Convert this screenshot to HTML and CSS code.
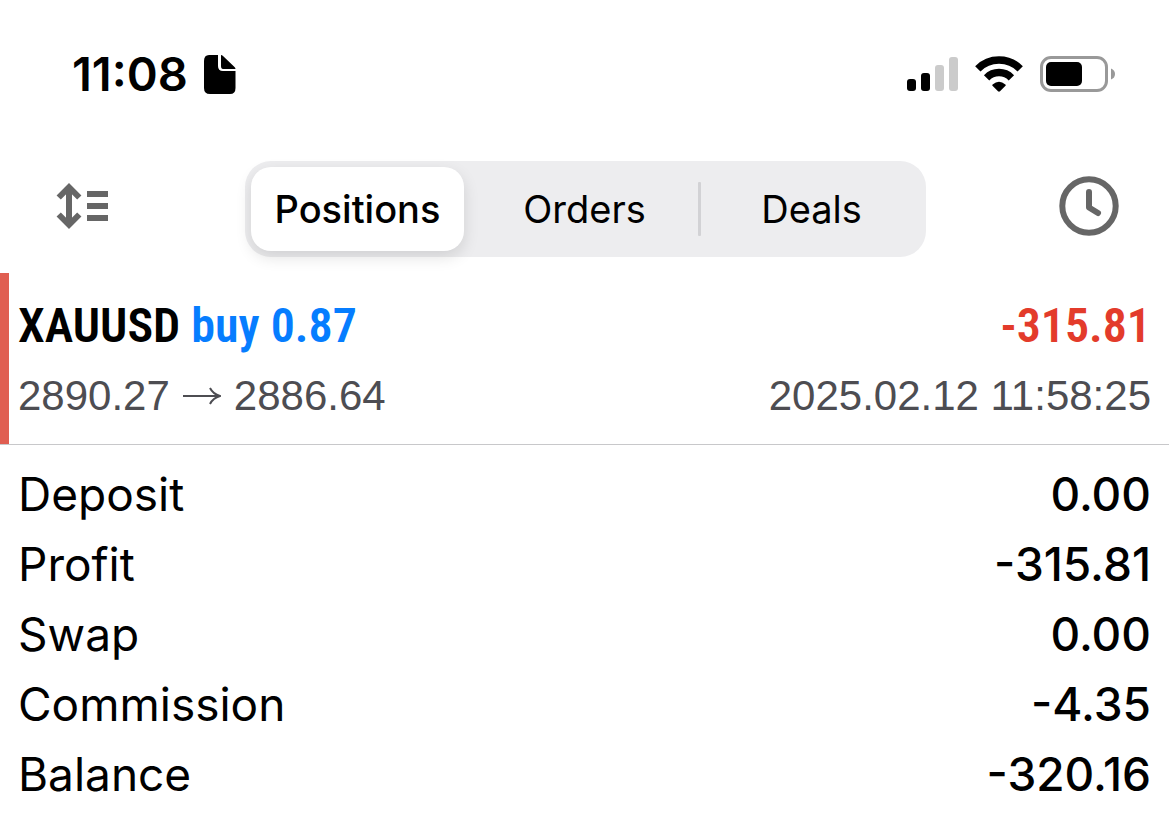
FILE: index.html
```html
<!DOCTYPE html>
<html lang="en">

<head>
    <meta charset="UTF-8">
    <meta name="viewport" content="width=device-width, initial-scale=1.0">
    <title>History | Positions</title>
    <link rel="stylesheet" href="styles.css">
</head>

<body>
    <header class="status-bar">
        <div class="status-left">
            <time class="clock">11:08</time>
            <svg width="32" height="40" viewBox="0 0 32 40" aria-hidden="true">
                <path d="M5 1H14V12Q14 17 19 17H31.500V34Q31.500 40 26 40H6Q0 40 0 34V7Q0 1 5 1Z" />
                <path d="M17 1Q18 1 19 2L30.500 13Q31.500 14 31.500 15H19Q17 15 17 12Z" />
            </svg>
        </div>
        <div class="status-right">
            <svg width="52" height="36" viewBox="0 0 52 36" aria-hidden="true">
                <rect x="1" y="23" width="9" height="12" rx="3" />
                <rect x="15" y="17" width="9" height="18" rx="3" />
                <rect class="signal-off" x="29" y="9" width="9" height="26" rx="3" />
                <rect class="signal-off" x="43" y="1" width="9" height="34" rx="3" />
            </svg>
            <svg width="48" height="36" viewBox="0 0 48 36" aria-hidden="true">
                <path class="wifi-arc" d="M2.800 12.800A30 30 0 0 1 45.200 12.800" />
                <path class="wifi-arc" d="M11.600 21.800A17.400 17.400 0 0 1 36.400 21.800" />
                <path d="M23 35.300L17.500 29.800Q17 29.200 17.600 28.600Q24 22.800 30.400 28.600Q31 29.200 30.500 29.800L25 35.300Q24 36.200 23 35.300Z" />
            </svg>
            <svg width="75" height="36" viewBox="0 0 75 36" aria-hidden="true">
                <rect class="battery-case" x="1.500" y="1.500" width="65" height="33" rx="9.500" />
                <rect x="6" y="6" width="36" height="24" rx="5" />
                <path class="battery-tip" d="M71 12.500Q75 14 75 18T71 23.500Z" />
            </svg>
        </div>
    </header>

    <nav class="toolbar">
        <button class="icon-btn" type="button" aria-label="Sort">
            <svg width="60" height="60" viewBox="2 0 60 60">
                <path class="sort-arrow" d="M19 11V49M8.700 21.500L19 11.200L29.300 21.500M8.700 38.500L19 48.800L29.300 38.500" />
                <path class="sort-lines" d="M37 18H58M37 30H58M37 42H58" />
            </svg>
        </button>
        <div class="segmented">
            <button class="segment active" type="button">Positions</button>
            <button class="segment" type="button">Orders</button>
            <span class="divider"></span>
            <button class="segment" type="button">Deals</button>
        </div>
        <button class="icon-btn" type="button" aria-label="Period">
            <svg width="60" height="60" viewBox="0 0 60 60">
                <circle class="dial" cx="30" cy="30" r="26.700" />
                <path class="hands" d="M30 16V31.500L39 37" />
            </svg>
        </button>
    </nav>

    <main>
        <section class="position">
            <div class="row deal">
                <h1>XAUUSD <span class="buy">buy 0.87</span></h1>
                <strong class="loss">-315.81</strong>
            </div>
            <div class="row details">
                <span class="prices">2890.27
                    <svg width="38" height="18" viewBox="0 0 38 18" role="img" aria-label="to">
                        <path d="M0 9H36M27 1Q30 7 37 9Q30 11 27 17" />
                    </svg>
                    2886.64</span>
                <time>2025.02.12 11:58:25</time>
            </div>
        </section>

        <dl class="summary">
            <div class="row">
                <dt>Deposit</dt>
                <dd>0.00</dd>
            </div>
            <div class="row">
                <dt>Profit</dt>
                <dd>-315.81</dd>
            </div>
            <div class="row">
                <dt>Swap</dt>
                <dd>0.00</dd>
            </div>
            <div class="row">
                <dt>Commission</dt>
                <dd>-4.35</dd>
            </div>
            <div class="row">
                <dt>Balance</dt>
                <dd>-320.16</dd>
            </div>
        </dl>
    </main>
</body>

</html>
```
FILE: styles.css
```css
* {
    margin: 0;
    padding: 0;
    box-sizing: border-box;
}

body {
    background-color: #fff;
    color: #000;
    font-family: Inter, "Liberation Sans", sans-serif;
}

svg {
    display: block;
}

button {
    border: none;
    background: none;
    color: inherit;
    font-family: inherit;
    cursor: pointer;
}

/* -------- STATUS BAR -------- */
.status-bar {
    display: flex;
    justify-content: space-between;
    align-items: center;
    padding: 50px 54px 0 72px;
}

.status-left {
    display: flex;
    align-items: center;
    gap: 16px;
}

.clock {
    font-size: 47px;
    line-height: 48px;
    font-weight: 600;
}

.status-right {
    display: flex;
    gap: 17px;
}

.signal-off {
    fill: #cbcbcb;
}

.wifi-arc {
    fill: none;
    stroke: #000;
    stroke-width: 7.5;
}

.battery-case {
    fill: none;
    stroke: #999;
    stroke-width: 3;
}

.battery-tip {
    fill: #999;
}

/* -------- TOOLBAR -------- */
.toolbar {
    display: flex;
    align-items: center;
    gap: 133px;
    margin-top: 63px;
    padding: 0 50px 0 52px;
}

.icon-btn {
    margin-bottom: 6px;
}

.icon-btn path,
.icon-btn circle {
    fill: none;
    stroke: #666;
    stroke-width: 6;
}

.icon-btn .hands {
    stroke-linecap: round;
    stroke-linejoin: round;
}

.segmented {
    flex: 1;
    display: flex;
    align-items: center;
    height: 96px;
    border-radius: 26px;
    background-color: #ededef;
}

.segment {
    flex: 1;
    height: 84px;
    margin: 0 8px 0 6px;
    border-radius: 20px;
    font-size: 38px;
}

.segment.active {
    background-color: #fff;
    box-shadow: 0 6px 16px rgba(0, 0, 0, 0.12);
    font-weight: 500;
}

.divider {
    width: 3px;
    height: 54px;
    margin: 0 -2px 0 -1px;
    border-radius: 1px;
    background-color: #d2d2d5;
}

/* -------- POSITION -------- */
.row {
    display: flex;
    justify-content: space-between;
    align-items: center;
    line-height: 70px;
}

.position {
    margin-top: 16px;
    padding: 18px 18px 13px 9px;
    border-left: 9px solid #e05e51;
    box-shadow: 0 1px #c8c8ca;
}

.deal h1,
.deal strong {
    font-family: "Roboto Condensed", "Open Sans Condensed", "Liberation Sans Narrow", "Liberation Sans", sans-serif;
    font-size: 48px;
    font-weight: 600;
}

.deal .buy {
    color: #067dff;
}

.deal .loss {
    color: #e33b2b;
}

.details {
    color: #4d4d52;
    font-family: "Liberation Sans", Arial, sans-serif;
    font-size: 42px;
}

.prices {
    display: flex;
    align-items: center;
    gap: 13px;
}

.prices path {
    fill: none;
    stroke: #4d4d52;
    stroke-width: 2;
}

/* -------- SUMMARY -------- */
.summary {
    padding: 15px 18px;
    font-size: 46px;
}

.summary dd {
    font-weight: 500;
}
```
